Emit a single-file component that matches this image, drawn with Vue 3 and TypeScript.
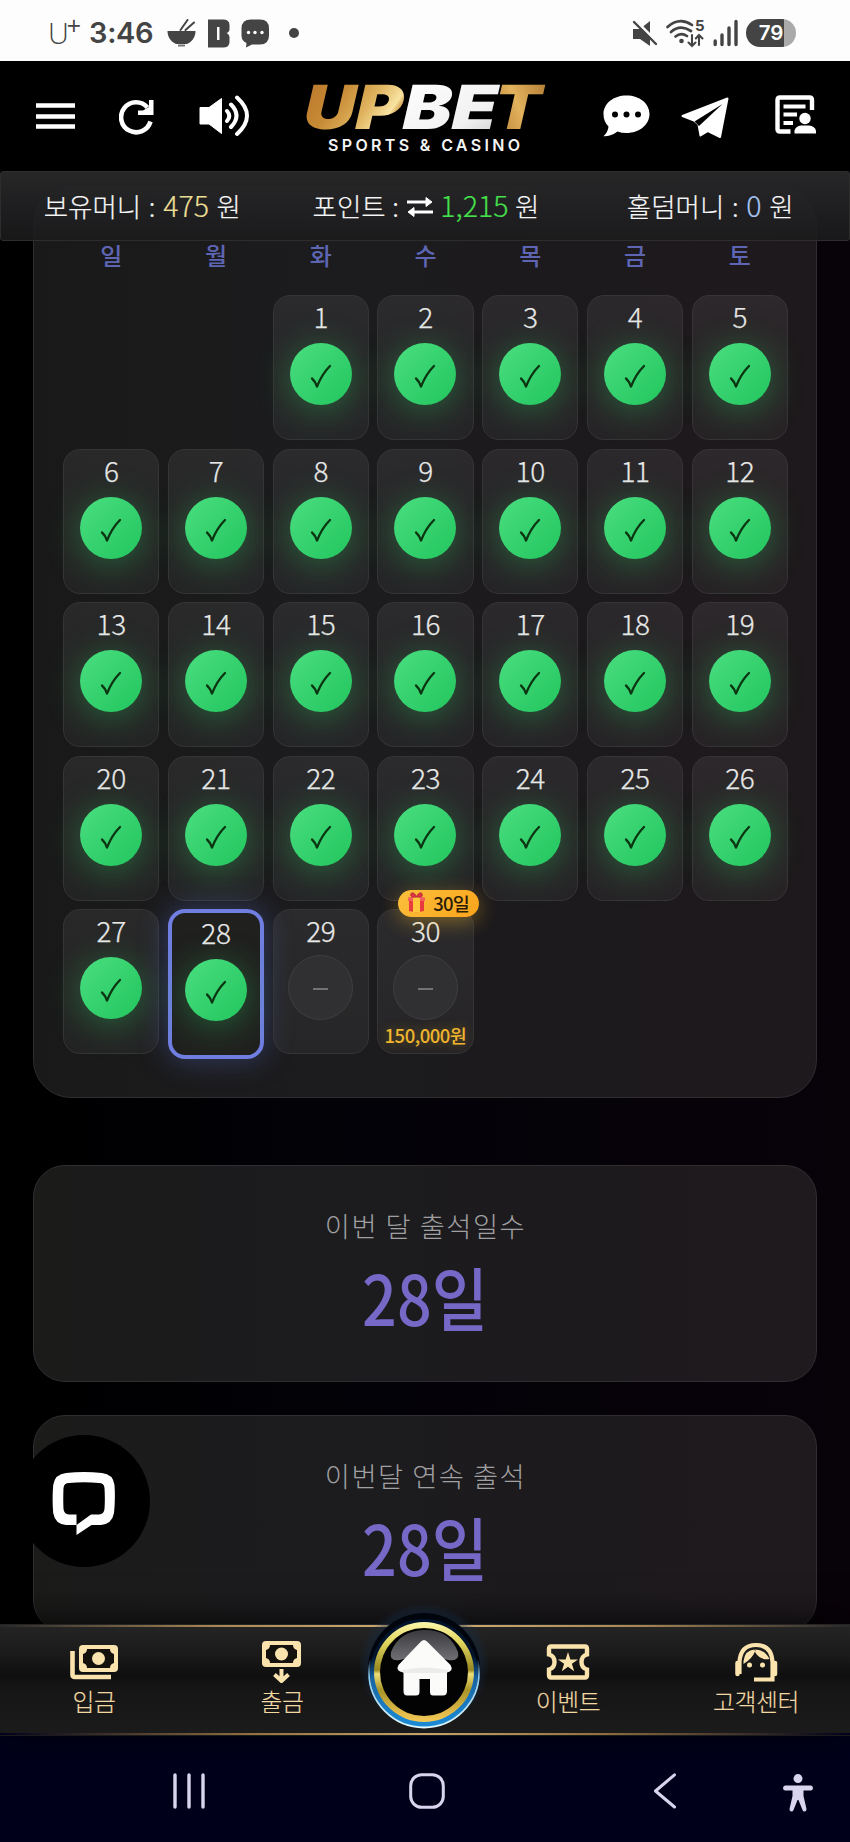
<script setup lang="ts">
interface Day {
  n: number
  checked: boolean
  today: boolean
  badge?: string
  reward?: string
}

const weekdays: string[] = ['일', '월', '화', '수', '목', '금', '토']
const days: Day[] = Array.from({ length: 30 }, (_, i) => ({
  n: i + 1,
  checked: i + 1 <= 28,
  today: i + 1 === 28,
  badge: i + 1 === 30 ? '30일' : undefined,
  reward: i + 1 === 30 ? '150,000원' : undefined,
}))
const stats = [
  { label: '이번 달 출석일수', value: '28일' },
  { label: '이번달 연속 출석', value: '28일' },
]
</script>

<template>
  <div class="screen">
    <div class="status">
      <span class="carrier">U<sup>+</sup></span>
      <span class="clock">3:46</span>
      <svg class="s-bowl" width="29" height="29" viewBox="0 0 29 29">
        <path d="M0.5 12H28.5C28.5 18 25 23 20 25H9C4 23 .5 18 .5 12Z" fill="#444" />
        <path d="M11 26.5h7" stroke="#777" stroke-width="2" />
        <path d="M13.5 11 20.5 1M18.5 11 27 3.5" stroke="#444" stroke-width="2" stroke-linecap="round" />
      </svg>
      <svg class="s-b" width="22" height="29" viewBox="0 0 22 29">
        <path fill-rule="evenodd" fill="#444" d="M0 .5H15Q21.500 .5 21.500 6V10Q21.500 13 18.500 14Q21.500 15.500 21.500 18.500V23Q21.500 28.500 15 28.500H0ZM9 8V21H11.500V8Z" />
      </svg>
      <svg class="s-chat" width="29" height="29" viewBox="0 0 29 29">
        <path d="M10 .5h9q9 0 9 9v7q0 9-9 9h-8l-6 3 .5-4.500Q.5 22 .5 16.500v-7q0-9 9.500-9Z" fill="#444" />
        <g fill="#fff"><circle cx="7.500" cy="13.500" r="1.700" /><circle cx="14" cy="13.500" r="1.700" /><circle cx="21" cy="13.500" r="1.700" /></g>
      </svg>
      <i class="s-dot"></i>
      <svg class="s-mute" width="26" height="27" viewBox="0 0 26 27">
        <path d="M1 9H8L18 1V26L8 19H1Z" fill="#444" />
        <path d="M3.500 .5 26 23" stroke="#fdfdfd" stroke-width="3" />
        <path d="M2 2 24 24" stroke="#444" stroke-width="2.400" stroke-linecap="round" />
      </svg>
      <svg class="s-wifi" width="38" height="29" viewBox="0 0 38 29">
        <g fill="none" stroke="#444" stroke-width="2.700" stroke-linecap="round">
          <path d="M1.500 8Q13.500-2.500 26 6M5 13Q14 5 25 12M9.500 17.500Q15 13 21 17" />
          <path d="M26 16v11M22.500 23.500 26 27l3.500-3.500M33 26V16M29.800 19.500 33 16l3.500 3.500" stroke-width="2.100" />
        </g>
        <circle cx="15.500" cy="22" r="2.300" fill="#444" />
        <text x="29" y="12" font-size="15" font-weight="700" fill="#444">5</text>
      </svg>
      <svg class="s-signal" width="26" height="28" viewBox="0 0 26 28">
        <path d="M2.200 22V25.500M9 16V25.500M16 9V25.500M23 2.500V25.500" stroke="#444" stroke-width="3.400" stroke-linecap="round" />
      </svg>
      <span class="battery">79</span>
    </div>

    <header class="header">
      <svg class="h-menu" width="39" height="26" viewBox="0 0 39 26">
        <path d="M0 2.500H39M0 13.500H39M0 23.500H39" stroke="#fff" stroke-width="4.600" />
      </svg>
      <svg class="h-reload" width="35" height="36" viewBox="0 0 35 36">
        <path d="M31.500 22.500A15 15 0 1 1 28.500 8.500" fill="none" stroke="#fff" stroke-width="4.600" />
        <path d="M30 1h4.500v15H19V11.500h5L30 8Z" fill="#fff" />
      </svg>
      <svg class="h-sound" width="51" height="42" viewBox="0 0 51 42">
        <path d="M1 12.500H10L22.500 3.500V38.500L10 29H1Z" fill="#fff" stroke="#fff" stroke-linejoin="round" />
        <g fill="none" stroke="#fff" stroke-width="4" stroke-linecap="round">
          <path d="M28 16Q32.500 21 28 26M32 9.500Q43 20.500 32 32M38 2.500Q58 20.500 38 39" />
        </g>
      </svg>
      <svg class="h-logo" width="240" height="70" viewBox="0 0 240 70">
        <defs>
          <linearGradient id="gold" x1="0" x2="1" y1="0" y2=".35">
            <stop offset="0" stop-color="#b9772c" /><stop offset=".4" stop-color="#c88b35" />
            <stop offset=".72" stop-color="#e0b460" /><stop offset=".95" stop-color="#f8e3a2" /><stop offset="1" stop-color="#dcb264" />
          </linearGradient>
          <linearGradient id="goldT" x1="0" x2="1" y1="1" y2="0">
            <stop offset="0" stop-color="#a66c25" /><stop offset=".5" stop-color="#e2b25d" /><stop offset="1" stop-color="#a9712d" />
          </linearGradient>
          <linearGradient id="silver" x1="0" x2="1" y1="0" y2="1">
            <stop offset="0" stop-color="#fff" /><stop offset=".7" stop-color="#f1f1f1" /><stop offset="1" stop-color="#ccc" />
          </linearGradient>
        </defs>
        <g class="wordmark" transform="translate(0 46) skewX(-13)">
          <text x="-5" y="0" textLength="99" lengthAdjust="spacingAndGlyphs" fill="url(#gold)">UP</text>
          <text x="94" y="0" textLength="94" lengthAdjust="spacingAndGlyphs" fill="url(#silver)">BE</text>
          <text x="185" y="0" textLength="47" lengthAdjust="spacingAndGlyphs" fill="url(#goldT)">T</text>
        </g>
        <text class="tagline" x="23" y="68" textLength="192" lengthAdjust="spacing">SPORTS &amp; CASINO</text>
      </svg>
      <svg class="h-talk" width="47" height="42" viewBox="0 0 47 42">
        <path d="M23.500 .5C36.500 .5 46.500 8.500 46.500 19S36.500 38 23.500 38q-5 0-9-1.500Q8 41.500 .5 41.200 5 37 5.500 31.500.5 26.500 .5 19C.5 8.500 10.500 .5 23.500 .5Z" fill="#fff" />
        <circle cx="12" cy="19.500" r="3" /><circle cx="23.500" cy="19.500" r="3" /><circle cx="35" cy="19.500" r="3" />
      </svg>
      <svg class="h-plane" width="48" height="42" viewBox="0 0 48 42">
        <path d="M46.500 1.500 39 40 27 34 19.500 38.500 17.500 27.500 13 23.500 1.500 19Z" fill="#fff" stroke="#fff" stroke-width="2" stroke-linejoin="round" />
        <path d="M13.500 24.500 41.500 7 18 29Z" fill="#000" />
      </svg>
      <svg class="h-doc" width="42" height="40" viewBox="0 0 42 40">
        <path d="M15.500 36.500H5Q2.500 36.500 2.500 34V5Q2.500 2.500 5 2.500H34.500Q37 2.500 37 5V15" fill="none" stroke="#fff" stroke-width="4.400" />
        <path d="M8.500 11.500H30.500M8.500 19.500H22M8.500 28H18" stroke="#fff" stroke-width="4" />
        <circle cx="30" cy="23.500" r="5.700" fill="#fff" />
        <path d="M19.500 38.500V35.500Q21 31 26 30.500H34Q39.500 31 41 35.500V38.500Z" fill="#fff" />
      </svg>
    </header>

    <div class="money">
      <div class="money-item">보유머니 : <b class="gold">475</b> 원</div>
      <div class="money-item mid">포인트 : <svg width="28" height="22" viewBox="0 0 28 22">
          <g stroke="#fff" stroke-width="3.200" fill="#fff"><path d="M1 6H21M7 16H27" /><path d="M20 1.500 26 6 20 10.500ZM8 11.500 2 16 8 20.500Z" stroke-width="1" stroke-linejoin="round" /></g>
        </svg> <b class="green">1,215</b> 원</div>
      <div class="money-item last">홀덤머니 : <b class="blue">0</b> 원</div>
    </div>

    <main class="content">
      <section class="calendar">
        <div class="weekdays"><span v-for="w in weekdays" :key="w">{{ w }}</span></div>
        <div class="grid">
          <div v-for="d in days" :key="d.n" class="day" :class="{ first: d.n === 1, today: d.today, pending: !d.checked }">
            <span v-if="d.badge" class="badge">
              <svg width="19" height="21" viewBox="0 0 19 21">
                <path d="M2 7H17V19L9.500 20.500 2 19Z" fill="#e83b3e" /><path d="M1 5.500 9.500 4 18 5.500V9H1Z" fill="#f4605a" />
                <path d="M6 5H13V20.500H6Z" fill="#ffc63b" />
                <path d="M9.500 5C5 6 2.500 4 4 1.500 6-.5 8.500 2 9.500 5 10.500 2 13-.5 15 1.500 16.500 4 14 6 9.500 5Z" fill="#df3243" stroke="#a92937" stroke-width=".7" />
              </svg>{{ d.badge }}
            </span>
            <span class="num">{{ d.n }}</span>
            <span class="mark">
              <svg v-if="d.checked" width="62" height="62" viewBox="0 0 62 62">
                <path d="M22 35.500Q25 38 27 43.500Q32 31 40 23" fill="none" stroke="#0c3512" stroke-width="2.300" stroke-linecap="round" stroke-linejoin="round" />
              </svg>
              <i v-else class="dash"></i>
            </span>
            <span v-if="d.reward" class="reward">{{ d.reward }}</span>
          </div>
        </div>
      </section>

      <section v-for="s in stats" :key="s.label" class="stat">
        <div class="stat-label">{{ s.label }}</div>
        <div class="stat-value">{{ s.value }}</div>
      </section>
    </main>

    <button class="chat" aria-label="chat">
      <svg width="64" height="64" viewBox="0 0 64 64">
        <path fill-rule="evenodd" fill="#fff" d="M14 2Q32 .2 50 2 61 3 62.500 14 63.500 28 62 42 60 53 49 54H39.500L24.500 64V54H14Q3 53 1.200 42 0 28 1.200 14 3 3 14 2ZM17 12Q32 10.500 47 12 52 12 52.500 17 53.200 28 52.500 38 52 43 47 43.500H39L24.500 54V43.500H17Q12 43 11.500 38 11 28 11.500 17 12 12 17 12Z" />
      </svg>
    </button>

    <nav class="tabs">
      <div class="tab">
        <svg width="48" height="42" viewBox="0 0 48 42">
          <path d="M2.500 10V33.500Q2.500 36 5 36H41" fill="none" stroke="#fbe3ae" stroke-width="4.600" />
          <rect x="9" y="4" width="39" height="27" rx="4" fill="#fbe3ae" />
          <path d="M17 8H40Q40 12 44 13V22Q40 23 40 27H17Q17 23 13 22V13Q17 12 17 8Z" fill="#15120d" /><circle cx="28.500" cy="17.500" r="6.500" fill="#fbe3ae" />
        </svg>
        <span>입금</span>
      </div>
      <div class="tab">
        <svg width="40" height="42" viewBox="0 0 40 42">
          <rect y="0" width="39" height="26" rx="4" fill="#fbe3ae" />
          <path d="M8 4H31Q31 8 35 9V17Q31 18 31 22H8Q8 18 4 17V9Q8 8 8 4Z" fill="#15120d" /><circle cx="19.500" cy="13" r="6.500" fill="#fbe3ae" />
          <path d="M19.500 28V39M12.500 33.500 19.500 40 26.500 33.500" fill="none" stroke="#fbe3ae" stroke-width="4" />
        </svg>
        <span>출금</span>
      </div>
      <div class="tab"></div>
      <div class="tab">
        <svg width="44" height="42" viewBox="0 0 44 42">
          <path d="M5 5.500H39Q41 5.500 41 8V13.500Q35.500 15 35.500 21T41 28.500V34Q41 36.500 39 36.500H5Q3 36.500 3 34V28.500Q8.500 27 8.500 21T3 13.500V8Q3 5.500 5 5.500Z" fill="none" stroke="#fbe3ae" stroke-width="4.400" />
          <path d="M22 11 24.400 18.400H32L25.900 22.800 28.200 30.200 22 25.700 15.800 30.200 18.100 22.800 12 18.400H19.600Z" fill="#fbe3ae" />
        </svg>
        <span>이벤트</span>
      </div>
      <div class="tab">
        <svg width="44" height="42" viewBox="0 0 44 42">
          <path d="M5.500 33V21Q6.500 4 22 4T38.500 21V38.500H20" fill="none" stroke="#fbe3ae" stroke-width="4.200" />
          <path d="M3.500 22V33M41 22V33" stroke="#fbe3ae" stroke-width="4.500" stroke-linecap="round" />
          <path d="M9.500 20Q11 9 20.500 8.500L21 10.500Q18 18 9.500 23ZM21.500 8.500Q31 9 35.500 18 26 19.500 21 11Z" fill="#fbe3ae" />
          <circle cx="15.500" cy="24" r="2.500" fill="#fbe3ae" /><circle cx="28.500" cy="24" r="2.500" fill="#fbe3ae" />
        </svg>
        <span>고객센터</span>
      </div>
      <svg class="home" width="130" height="130" viewBox="0 0 130 130">
        <defs>
          <linearGradient id="ring" x1="0" x2="0" y1="0" y2="1">
            <stop offset="0" stop-color="#fcf6ab" /><stop offset=".2" stop-color="#e2d75f" /><stop offset=".48" stop-color="#988822" /><stop offset=".52" stop-color="#ede07a" /><stop offset=".68" stop-color="#aa9428" /><stop offset="1" stop-color="#f6ca59" />
          </linearGradient>
          <linearGradient id="blue" x1="0" x2="0" y1="0" y2="1">
            <stop offset=".35" stop-color="#02142c" /><stop offset=".55" stop-color="#1664a5" /><stop offset="1" stop-color="#1b8cd8" />
          </linearGradient>
          <linearGradient id="edge" x1="0" x2="0" y1="0" y2="1">
            <stop offset=".38" stop-color="#9ddcff" stop-opacity="0" /><stop offset=".55" stop-color="#8acbf3" /><stop offset="1" stop-color="#e0faff" />
          </linearGradient>
          <linearGradient id="gloss" x1="0" x2="0" y1="0" y2="1">
            <stop offset="0" stop-color="#3a3a3e" /><stop offset="1" stop-color="#707074" />
          </linearGradient>
          <radialGradient id="halo"><stop offset=".75" stop-color="#123" stop-opacity=".7" /><stop offset="1" stop-color="#17375c" stop-opacity="0" /></radialGradient>
        </defs>
        <ellipse cx="64" cy="60" rx="65" ry="62" fill="url(#halo)" />
        <circle cx="64" cy="64" r="56" fill="#01050e" />
        <circle cx="64" cy="68" r="54" fill="url(#blue)" />
        <circle cx="64" cy="67.500" r="55" fill="none" stroke="url(#edge)" stroke-width="1.800" />
        <circle cx="64" cy="67" r="50" fill="url(#ring)" />
        <circle cx="64" cy="67" r="44" fill="#030304" />
        <path d="M31 47Q39 26 64 25T98 47Q100 57 88 55 64 47 40 55 29 57 31 47Z" fill="url(#gloss)" />
        <path d="M61 36.500Q64 33.500 67 36.500L90.500 60Q94 66 87 67.500V86Q87 90.500 83 90.500H73Q70 90.500 70 87V74H59.500V87Q59.500 90.500 56 90.500H47Q43.500 90.500 43.500 86V67.500Q35 66 38.500 60Z" fill="#fbfbf9" />
        <path d="M42 65Q64 60 88 65L87 68H43Z" fill="#e6e6e4" opacity=".7" />
      </svg>
    </nav>

    <div class="system">
      <svg class="y-recent" width="34" height="36" viewBox="0 0 34 36"><path d="M3 2V34M17 2V34M31 2V34" stroke="#d9d5ee" stroke-width="3.400" stroke-linecap="round" /></svg>
      <svg class="y-home" width="36" height="36" viewBox="0 0 36 36"><rect x="1.700" y="1.700" width="32.600" height="32.600" rx="11" fill="none" stroke="#d9d5ee" stroke-width="3" /></svg>
      <svg class="y-back" width="24" height="36" viewBox="0 0 24 36"><path d="M21.500 1.800 2.500 18 21.500 34" fill="none" stroke="#d9d5ee" stroke-width="3" stroke-linecap="round" stroke-linejoin="round" /></svg>
      <svg class="y-person" width="30" height="38" viewBox="0 0 30 38">
        <circle cx="15" cy="4.600" r="4.500" fill="#d9d5ee" />
        <path d="M2 11.500H28Q30 12 30 14T28 16.500H20.500L20.500 22 23.500 35Q23.500 37.500 21.500 37.500 20 37.500 19.500 36L15.500 26H14.500L10.500 36Q10 37.500 8.500 37.500 6.500 37.500 6.500 35L9.500 22V16.500H2Q0 16 0 14T2 11.500Z" fill="#d9d5ee" />
      </svg>
    </div>
  </div>
</template>

<style>
body { background: #000; }
</style>

<style scoped>
* { box-sizing: border-box; }
.screen {
  position: relative; width: 850px; height: 1842px; overflow: hidden; display: flex; flex-direction: column;
  font-family: "Noto Sans CJK KR", "Noto Sans", sans-serif; font-weight: 300;
  background: linear-gradient(90deg, #000 0, #020207 35%, #050208 65%, #080209 100%);
}
svg { flex: none; display: block; }

.status { height: 61px; background: #fdfdfd; display: flex; align-items: center; padding: 5px 54px 0 48px; color: #444; font-family: Inter, sans-serif; flex: none; }
.status text { font-family: Inter, sans-serif; }
.carrier { width: 41px; font: 300 29px "Open Sans", sans-serif; line-height: 30px; white-space: nowrap; }
.carrier sup { font-size: 25px; line-height: 0; vertical-align: 9px; margin-left: -2px; font-weight: 400; }
.clock { width: 78px; font-size: 29px; font-weight: 600; letter-spacing: -.3px; line-height: 30px; }
.s-b { margin-left: 12px; }
.s-chat { margin-left: 11px; }
.s-dot { width: 10px; height: 10px; border-radius: 50%; background: #444; margin-left: 19px; }
.s-mute { margin-left: auto; }
.s-wifi { margin-left: 8px; overflow: visible; }
.s-signal { margin-left: 9px; }
.battery { margin-left: 7px; width: 50px; height: 28px; border-radius: 14px; background: linear-gradient(90deg, #444 0 38px, #aaa 38px); color: #fff; font-weight: 600; font-size: 20.500px; line-height: 28px; text-align: center; flex: none; }

.header { height: 110px; background: #000; display: flex; align-items: center; padding-left: 36px; flex: none; }
.h-reload { margin: 2px 0 0 44px; }
.h-sound { margin-left: 45px; }
.h-logo { margin: 3px 0 0 55px; overflow: visible; }
.h-talk { margin-left: 58px; }
.h-plane { margin: 3px 0 0 31px; }
.h-doc { margin: 0 0 2px 46px; }
.wordmark { font: 900 61px Inter, sans-serif; }
.tagline { font: 600 16px Inter, sans-serif; fill: #f4f4f4; }

.money {
  position: absolute; z-index: 2; top: 171px; left: 0; right: 0; height: 70px; display: grid; grid-template-columns: repeat(3, 1fr);
  background: linear-gradient(180deg, rgba(40, 40, 41, .97), rgba(32, 32, 34, .9) 60%, rgba(27, 27, 28, .88)); border: 1px solid #2d2d2e; border-radius: 3px;
}
.money-item { text-align: center; font-size: 26.500px; line-height: 65px; height: 68px; color: #f6f6f6; letter-spacing: 0; white-space: nowrap; word-spacing: 1.800px; -webkit-text-stroke: .2px currentColor; }
.money-item b { font-weight: 300; font-size: 28.500px; }
.money-item svg { display: inline-block; vertical-align: -1px; }
.mid { padding-left: 2px; word-spacing: .8px; }
.last { padding-left: 5px; }
.gold { color: #ecdf95; }
.green { color: #45e04c; }
.blue { color: #a5c3f1; }

.content { flex: none; height: 1453px; overflow: hidden; padding: 16px 33px 0; }
.calendar {
  height: 911px; border: 1px solid #2e2d30; border-radius: 38px; padding: 0 28px 0 29px; margin-bottom: 67px;
  background: linear-gradient(90deg, #191919, #1c1c1e 35%, #1c1a1d 60%, #1e191c);
}
.weekdays { display: grid; grid-template-columns: repeat(7, 1fr); column-gap: 8.400px; height: 107px; padding-top: 50px; text-align: center; font-size: 24px; font-weight: 500; line-height: 34px; color: #5e66b4; }
.grid { display: grid; grid-template-columns: repeat(7, 1fr); gap: 8.500px 8.400px; grid-auto-rows: 145px; align-items: start; }
.day {
  position: relative; height: 145px; border: 1px solid #353536; border-radius: 17px; display: flex; flex-direction: column; align-items: center; padding-top: 5px;
  background: linear-gradient(180deg, rgba(255, 255, 255, .065), rgba(255, 255, 255, .045));
}
.first { grid-column: 3; }
.num { font-size: 28px; line-height: 30px; height: 31px; color: #e8e8e8; letter-spacing: -.4px; -webkit-text-stroke: .25px #e8e8e8; }
.mark { position: relative; width: 62px; height: 62px; margin-top: 11px; border-radius: 50%; background: linear-gradient(135deg, #4ade80, #22c55e); box-shadow: 0 5px 34px rgba(46, 204, 95, .38); }
.today { height: 150px; border: 4px solid #6f7ee0; background: #20201f; box-shadow: 0 0 30px rgba(102, 126, 234, .36); padding-top: 4px; }
.pending .mark { width: 65px; height: 65px; margin-top: 9px; background: #303032; border: 1px solid #3e3e40; box-shadow: none; display: grid; place-items: center; }
.dash { width: 15px; height: 2px; margin-top: 3px; background: #727274; }
.reward { font-size: 18.500px; font-weight: 500; line-height: 28px; color: #efb52e; white-space: nowrap; letter-spacing: -.5px; margin-top: 1px; text-shadow: 0 0 12px rgba(251, 191, 36, .35); }
.badge {
  position: absolute; z-index: 1; top: -20px; right: -6px; width: 81px; height: 27px; border-radius: 14px; display: flex; align-items: center; justify-content: center; gap: 7px; padding-bottom: 2px;
  background: linear-gradient(135deg, #fbbf3c, #fba41b); box-shadow: 0 5px 20px rgba(251, 191, 36, .4); color: #2b1c06; font-size: 18.500px; font-weight: 500; letter-spacing: -.7px; white-space: nowrap;
}

.stat {
  height: 217px; margin-bottom: 33px; border: 1px solid #302e31; border-radius: 32px; padding-top: 38px; text-align: center;
  background: linear-gradient(90deg, #1b1b1a, #1c1c1f 35%, #1c1a1d 60%, #1f1a1e);
}
.stat-label { font-size: 27.300px; line-height: 42px; color: #a0a0a3; letter-spacing: 1.500px; padding-left: 1px; }
.stat-value { font-size: 69px; line-height: 80px; margin-top: 10px; color: #7568c6; font-weight: 500; transform: scaleX(.885); }

.chat { position: absolute; z-index: 3; left: 18px; top: 1435px; width: 132px; height: 132px; padding: 0; border: 0; border-radius: 50%; background: #000; display: grid; place-items: center; }
.chat svg { margin-top: 4px; }

.tabs {
  position: relative; z-index: 2; flex: none; height: 112px; display: grid; grid-template-columns: 188px 188px 98px 188px 188px;
  background: linear-gradient(90deg, #28282a, #a98653 25%, #d4b078 50%, #a98653 75%, #28282a) 0 1px / 100% 2px no-repeat,
    linear-gradient(90deg, #00001c, #947240 30%, #c6a36c 50%, #947240 70%, #00001c) 0 109px / 100% 2px no-repeat,
    linear-gradient(180deg, #252525 0, #1b1b1b 26%, #0f0f10 46%, #161617 58%, #1c1b1c 100%);
  box-shadow: 0 -4px 32px rgba(0, 0, 0, .75);
}
.tab { display: flex; flex-direction: column; align-items: center; padding-top: 17px; color: #f2d9a4; }
.tab span { font-size: 23.800px; line-height: 34px; margin-top: 1px; letter-spacing: -.4px; white-space: nowrap; -webkit-text-stroke: .15px currentColor; }
.home { position: absolute; left: 360px; top: -19px; }

.system { flex: none; height: 106px; background: #00001b; display: flex; align-items: center; padding: 4px 0 0 172px; }
.y-home { margin-left: 203px; }
.y-back { margin-left: 208px; }
.y-person { margin-left: 106px; margin-top: 3px; }
</style>
